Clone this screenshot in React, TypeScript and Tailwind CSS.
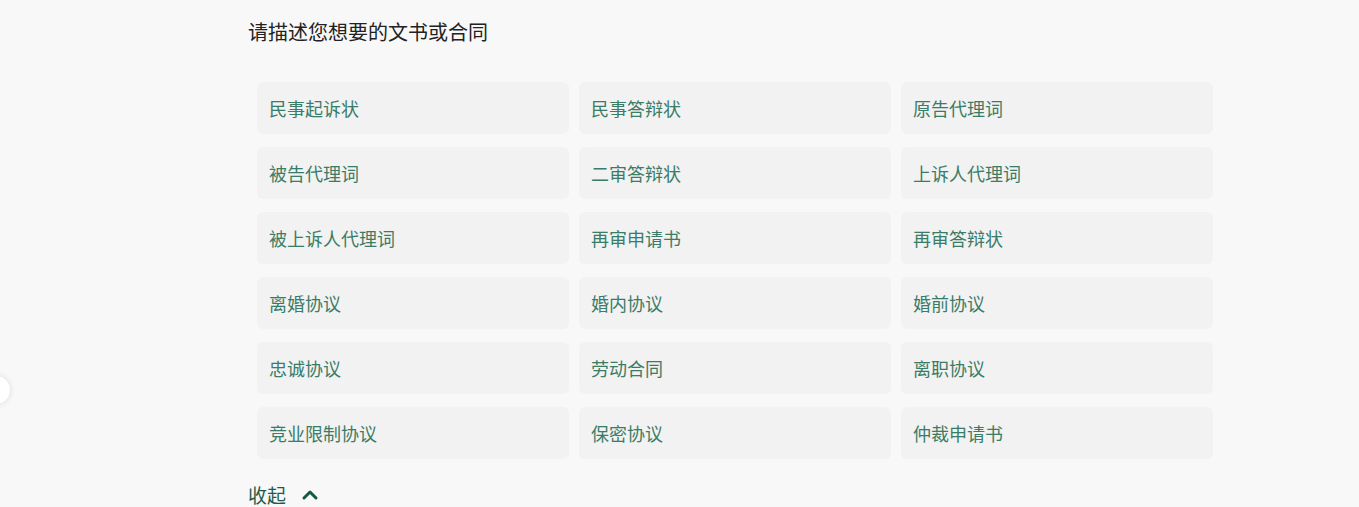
import { ChevronUp } from "lucide-react";

const ITEMS = [
  "民事起诉状",
  "民事答辩状",
  "原告代理词",
  "被告代理词",
  "二审答辩状",
  "上诉人代理词",
  "被上诉人代理词",
  "再审申请书",
  "再审答辩状",
  "离婚协议",
  "婚内协议",
  "婚前协议",
  "忠诚协议",
  "劳动合同",
  "离职协议",
  "竞业限制协议",
  "保密协议",
  "仲裁申请书",
];

export default function App() {
  return (
    <div
      className="relative h-[507px] w-full overflow-hidden bg-[#f8f8f8]"
      style={{ fontFamily: '"Noto Sans CJK SC", "Noto Sans", sans-serif' }}
    >
      {/* side handle */}
      <div className="absolute left-[-18px] top-[376px] h-[28px] w-[28px] rounded-full bg-white shadow-[0_0_6px_rgba(0,0,0,0.12)]" />

      <div className="pl-[248px] pt-[18px]">
        <h2 className="text-[20px] leading-[28px] font-normal text-[#222]">请描述您想要的文书或合同</h2>

        <div className="ml-[9px] mt-[36px] grid w-[956px] grid-cols-3 gap-x-[10px] gap-y-[13px]">
          {ITEMS.map((t) => (
            <button
              key={t}
              className="flex h-[52px] items-center rounded-[6px] bg-[#f2f2f2] px-[12px] text-left text-[18px] text-[#3a7c67]"
            >
              {t}
            </button>
          ))}
        </div>

        <button className="mt-[23px] flex items-center gap-[12px] text-[19px] leading-[26px] text-[#1f5c48]">
          收起
          <ChevronUp className="h-[24px] w-[24px] text-[#135a42]" strokeWidth={3} />
        </button>
      </div>
    </div>
  );
}
